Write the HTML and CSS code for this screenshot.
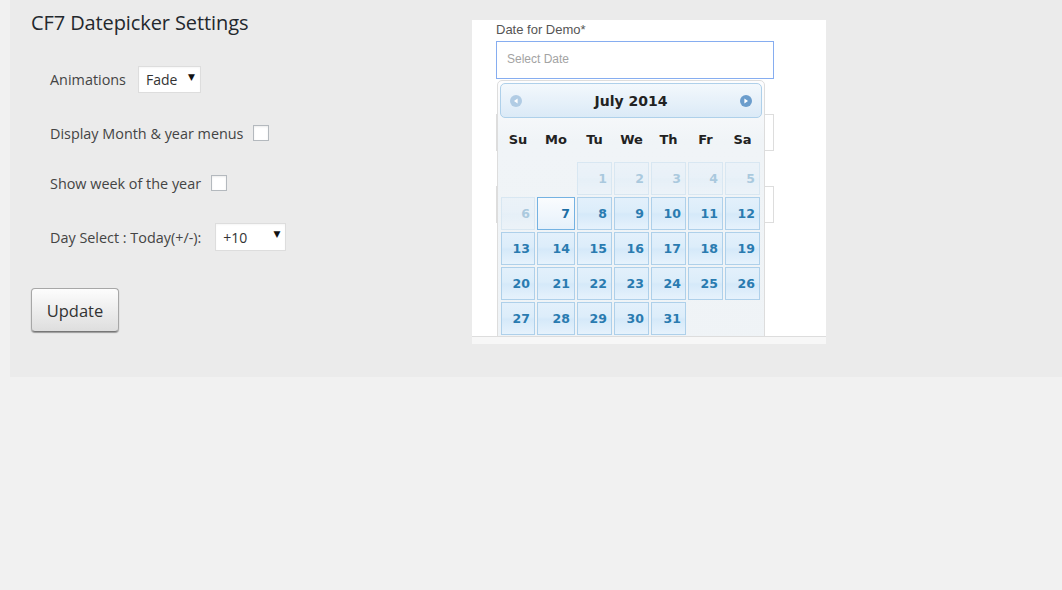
FILE: index.html
```html
<!DOCTYPE html>
<html lang="en">
<head>
  <meta charset="UTF-8" />
  <title>CF7 Datepicker Settings</title>
  <link rel="stylesheet" href="styles.css">
</head>
<body>

  <div class="panel">
    <div class="settings">
      <h2>CF7 Datepicker Settings</h2>

      <div class="row">
        <label>Animations</label>
        <span class="select select-fade">
          <select>
            <option>Fade</option>
          </select>
        </span>
      </div>

      <div class="row">
        <label>Display Month &amp; year menus</label>
        <input type="checkbox" class="check" />
      </div>

      <div class="row">
        <label>Show week of the year</label>
        <input type="checkbox" class="check" />
      </div>

      <div class="row row-day">
        <label>Day Select : Today(+/-):</label>
        <span class="select select-day">
          <select>
            <option>+10</option>
          </select>
        </span>
      </div>

      <button class="update">Update</button>
    </div>

    <div class="preview">
      <div class="demo">
        <div class="demo-form">
          <div class="demo-label">Date for Demo*</div>
          <div class="demo-input focus">Select Date</div>
          <div class="demo-input"></div>
          <div class="demo-input"></div>
        </div>

        <div class="datepicker">
          <div class="dp-header">
            <svg width="12" height="12" viewBox="0 0 12 12"><circle cx="6" cy="6" r="6" fill="#b1cce4"/><path d="M7.6 3.4 L4 6 L7.6 8.6 Z" fill="#fff"/></svg>
            <span class="dp-title">July 2014</span>
            <svg width="12" height="12" viewBox="0 0 12 12"><circle cx="6" cy="6" r="6" fill="#6b9dcc"/><path d="M4.4 3.4 L8 6 L4.4 8.6 Z" fill="#fff"/></svg>
          </div>

          <div class="dp-days">
            <span>Su</span><span>Mo</span><span>Tu</span><span>We</span><span>Th</span><span>Fr</span><span>Sa</span>
          </div>

          <div class="dp-grid" id="dpGrid"></div>
        </div>
      </div>
      <div class="preview-foot"></div>
    </div>
  </div>

  <script>
    document.addEventListener('DOMContentLoaded', function () {
      const grid = document.getElementById('dpGrid');
      const firstDay = 2;   // 1 July 2014 is a Tuesday
      const today = 7;

      for (let i = 0; i < firstDay; i++) {
        grid.appendChild(document.createElement('span'));
      }

      for (let d = 1; d <= 31; d++) {
        const cell = document.createElement('a');
        cell.classList.add('dp-cell');
        if (d < today) cell.classList.add('disabled');
        if (d === today) cell.classList.add('today');
        cell.textContent = d;
        grid.appendChild(cell);
      }
    });
  </script>

</body>
</html>
```

FILE: styles.css
```css
html, body {
  margin: 0;
  padding: 0;
}

body {
  background-color: #f1f1f1;
  font-family: 'Open Sans', sans-serif;
  color: #444;
}

.panel {
  display: flex;
  margin-left: 10px;
  background-color: #ebebeb;
}

.settings {
  width: 441px;
  padding: 9px 0 45px 21px;
}

.settings h2 {
  margin: 0 0 28px;
  font-size: 20px;
  font-weight: 400;
  line-height: 28px;
  letter-spacing: -0.1px;
  color: #23282d;
}

.row {
  display: flex;
  align-items: center;
  height: 28px;
  margin: 0 0 26px 19px;
  font-size: 14.4px;
}

.row:nth-of-type(2) {
  margin-bottom: 22px;
}

.row label {
  margin-right: 10px;
}

.row-day label {
  margin-right: 14px;
}

.select {
  position: relative;
  display: inline-block;
  margin-left: 2px;
}

.select select {
  appearance: none;
  -webkit-appearance: none;
  height: 27px;
  padding: 0 0 0 7px;
  border: 1px solid #ddd;
  background: #fff;
  font-family: 'Open Sans', sans-serif;
  font-size: 14px;
  color: #333;
  box-shadow: inset 0 1px 2px rgba(0,0,0,0.04);
}

.select::after {
  content: '\25BC';
  position: absolute;
  right: 6px;
  top: 6px;
  font-family: 'DejaVu Sans', sans-serif;
  font-size: 9px;
  color: #111;
  pointer-events: none;
}

.select-fade select {
  width: 63px;
}

.select-day {
  margin-left: 0;
}

.select-day select {
  width: 71px;
  height: 28px;
}

.check {
  appearance: none;
  -webkit-appearance: none;
  width: 16px;
  height: 16px;
  margin: 0;
  border: 1px solid #b4b9be;
  background: #fff;
  box-shadow: inset 0 1px 2px rgba(0,0,0,0.08);
}

.update {
  margin-top: 11px;
  width: 88px;
  height: 44px;
  border: 1px solid #a7a7a7;
  border-bottom-color: #777;
  border-radius: 4px;
  background: linear-gradient(#fdfdfd, #dedede);
  box-shadow: 0 1px 1px rgba(0,0,0,0.35);
  font-family: 'Open Sans', sans-serif;
  font-size: 16.5px;
  color: #333;
}

/* screenshot of the front-end form */
.preview {
  width: 354px;
  margin-top: 20px;
  align-self: flex-start;
}

.demo {
  position: relative;
  height: 316px;
  overflow: hidden;
  background: #fff;
  border-bottom: 1px solid #ddd;
}

.preview-foot {
  height: 7px;
  background: #f7f7f7;
}

.demo-form {
  padding: 2px 0 0 24px;
  font-family: 'Liberation Sans', Arial, sans-serif;
}

.demo-label {
  font-size: 13px;
  line-height: 15px;
  color: #555;
}

.demo-input {
  box-sizing: border-box;
  width: 278px;
  height: 37px;
  margin-top: 35px;
  border: 1px solid #ddd;
}

.demo-input.focus {
  height: 38px;
  margin-top: 4px;
  padding-left: 10px;
  border-color: #86adf0;
  font-size: 12px;
  line-height: 34px;
  color: #a3a3a3;
}

.datepicker {
  position: absolute;
  left: 25px;
  top: 60px;
  width: 262px;
  height: 300px;
  padding: 2px;
  border: 1px solid #ddd;
  border-radius: 5px 5px 0 0;
  background: linear-gradient(#fdfdfe 0, #f0f4f7 60px, #eff3f6 100%);
  font-family: 'DejaVu Sans', sans-serif;
}

.dp-header {
  display: flex;
  justify-content: space-between;
  align-items: center;
  box-sizing: border-box;
  height: 35px;
  padding: 1px 9px 0;
  border: 1px solid #aed0ea;
  border-radius: 5px;
  background: linear-gradient(#f3f8fc, #dbeaf7);
}

.dp-title {
  font-size: 14px;
  font-weight: 700;
  color: #222;
}

.dp-days,
.dp-grid {
  display: grid;
  grid-template-columns: 34px 38px repeat(5, 35px);
  column-gap: 2px;
  margin-left: 1px;
}

.dp-days {
  height: 42px;
  padding-bottom: 2px;
  align-items: center;
  font-size: 13px;
  font-weight: 700;
  color: #222;
}

.dp-days span {
  text-align: center;
}

.dp-grid {
  grid-auto-rows: 33px;
  row-gap: 2px;
}

.dp-cell {
  display: block;
  padding-right: 4px;
  border: 1px solid #aed0ea;
  background: linear-gradient(#e3f0fb 0%, #dcedfa 45%, #d5e9f9 52%, #e6f2fc 100%);
  font-size: 12.5px;
  font-weight: 700;
  line-height: 31px;
  text-align: right;
  color: #2a7bb0;
}

.dp-cell.disabled {
  opacity: 0.35;
}

.dp-cell.today {
  border-color: #74b2e2;
  background: linear-gradient(#fafcfe, #e6f1fb);
  color: #1d6fa5;
}
```
